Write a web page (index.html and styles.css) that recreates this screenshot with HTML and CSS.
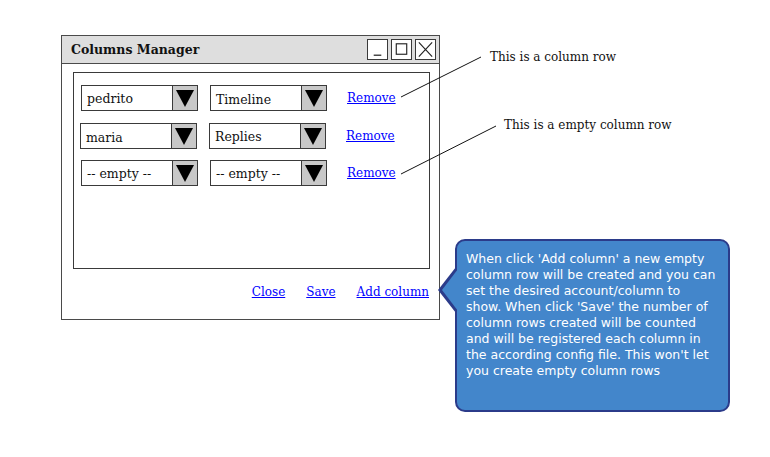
FILE: index.html
```html
<!DOCTYPE html>
<html>
<head>
<meta charset="utf-8">
<link rel="stylesheet" href="styles.css">
</head>
<body>
<div class="canvas">
  <div class="window">
    <div class="titlebar">
      <span class="title">Columns Manager</span>
      <div class="winbtns">
        <span class="wbtn"><svg width="20" height="21" viewBox="0 0 20 21"><path d="M6 16.5h8" stroke="#222" stroke-width="1.3" fill="none"/></svg></span>
        <span class="wbtn"><svg width="20" height="21" viewBox="0 0 20 21"><rect x="4.5" y="4.5" width="11" height="11" stroke="#222" stroke-width="1.2" fill="none"/></svg></span>
        <span class="wbtn"><svg width="20" height="21" viewBox="0 0 20 21"><path d="M3 3l14 15M17 3L3 18" stroke="#222" stroke-width="1.2" fill="none"/></svg></span>
      </div>
    </div>
    <div class="winbody">
      <div class="panel">
        <div class="row">
          <div class="select"><span class="val">pedrito</span><span class="arrow"></span></div>
          <div class="select"><span class="val low">Timeline</span><span class="arrow"></span></div>
          <a class="link remove" href="#">Remove</a>
        </div>
        <div class="row shift">
          <div class="select"><span class="val low">maria</span><span class="arrow"></span></div>
          <div class="select"><span class="val">Replies</span><span class="arrow"></span></div>
          <a class="link remove" href="#">Remove</a>
        </div>
        <div class="row">
          <div class="select"><span class="val">-- empty --</span><span class="arrow"></span></div>
          <div class="select"><span class="val">-- empty --</span><span class="arrow"></span></div>
          <a class="link remove" href="#">Remove</a>
        </div>
      </div>
      <div class="footer">
        <a class="link" href="#">Close</a>
        <a class="link" href="#">Save</a>
        <a class="link" href="#">Add column</a>
      </div>
    </div>
  </div>

  <svg class="lines" width="770" height="457" viewBox="0 0 770 457">
    <path d="M401 97L481 57" stroke="#111" stroke-width="1" fill="none"/>
    <path d="M401 174L496 126" stroke="#111" stroke-width="1" fill="none"/>
  </svg>
  <div class="note note1">This is a column row</div>
  <div class="note note2">This is a empty column row</div>

  <div class="callout">
    <p>When click 'Add column' a new empty<br>column row will be created and you can<br>set the desired account/column to<br>show. When click 'Save' the number of<br>column rows created will be counted<br>and will be registered each column in<br>the according config file. This won't let<br>you create empty column rows</p>
  </div>
</div>
</body>
</html>
```

FILE: styles.css
```css
html, body {
  margin: 0;
  padding: 0;
  background: #ffffff;
}

.canvas {
  position: relative;
  width: 770px;
  height: 457px;
  overflow: hidden;
  font-family: "DejaVu Serif", serif;
  color: #111;
}

.window {
  position: absolute;
  left: 61px;
  top: 35px;
  width: 379px;
  height: 285px;
  box-sizing: border-box;
  border: 1px solid #4a4a4a;
  background: #fff;
  display: flex;
  flex-direction: column;
}

.titlebar {
  height: 27px;
  background: #dedede;
  border-bottom: 1px solid #4a4a4a;
  display: flex;
  align-items: center;
  padding-left: 9px;
  padding-right: 3px;
}

.title {
  font-weight: bold;
  font-size: 12.5px;
  color: #111;
}

.winbtns {
  margin-left: auto;
  display: flex;
  gap: 3px;
}

.wbtn {
  width: 21px;
  height: 21px;
  box-sizing: border-box;
  border: 1px solid #3a3a3a;
  background: #fff;
  display: flex;
  align-items: center;
  justify-content: center;
}

.wbtn svg {
  display: block;
}

.winbody {
  padding: 8px 10px 0 11px;
  display: flex;
  flex-direction: column;
}

.panel {
  width: 357px;
  height: 197px;
  box-sizing: border-box;
  border: 1px solid #3a3a3a;
  padding: 12px 0 0 7px;
  display: flex;
  flex-direction: column;
  gap: 12px;
}

.row {
  display: flex;
  align-items: center;
  gap: 12px;
  height: 26px;
}

.row.shift {
  margin-left: -1px;
  margin-bottom: -1px;
}

.select {
  width: 117px;
  height: 26px;
  box-sizing: border-box;
  border: 1px solid #3a3a3a;
  display: flex;
  align-items: center;
  background: #fff;
}

.val {
  flex: 1;
  padding-left: 5px;
  font-size: 12.5px;
  color: #111;
  white-space: nowrap;
}

.val.low {
  padding-top: 2px;
}

.arrow {
  width: 25px;
  height: 100%;
  box-sizing: border-box;
  border-left: 1px solid #3a3a3a;
  background: #c8c8c8;
  display: flex;
  align-items: center;
  justify-content: center;
}

.arrow::after {
  content: "";
  width: 0;
  height: 0;
  border-left: 9px solid transparent;
  border-right: 9px solid transparent;
  border-top: 17px solid #000;
}

.link {
  font-size: 12px;
  color: #0000ff;
  text-decoration: underline;
}

.remove {
  margin-left: 8px;
}

.footer {
  display: flex;
  justify-content: flex-end;
  gap: 21px;
  margin-top: 16px;
}

.lines {
  position: absolute;
  left: 0;
  top: 0;
}

.note {
  position: absolute;
  font-size: 12px;
  color: #111;
  white-space: nowrap;
}

.note1 {
  left: 490px;
  top: 50px;
}

.note2 {
  left: 504px;
  top: 118px;
}

.callout {
  position: absolute;
  left: 455px;
  top: 239px;
  width: 275px;
  height: 173px;
  box-sizing: border-box;
  background: #4386cb;
  border: 2px solid #2b3b8a;
  border-radius: 10px;
  padding: 10px 4px 0 9px;
}

.callout::before {
  content: "";
  position: absolute;
  left: -19px;
  top: 26px;
  border-top: 23px solid transparent;
  border-bottom: 23px solid transparent;
  border-right: 18px solid #2b3b8a;
}

.callout::after {
  content: "";
  position: absolute;
  left: -15px;
  top: 28px;
  border-top: 21px solid transparent;
  border-bottom: 21px solid transparent;
  border-right: 16px solid #4386cb;
}

.callout p {
  margin: 0;
  font-family: "DejaVu Sans", sans-serif;
  font-size: 12.5px;
  line-height: 16px;
  color: #fff;
  white-space: nowrap;
}
```
